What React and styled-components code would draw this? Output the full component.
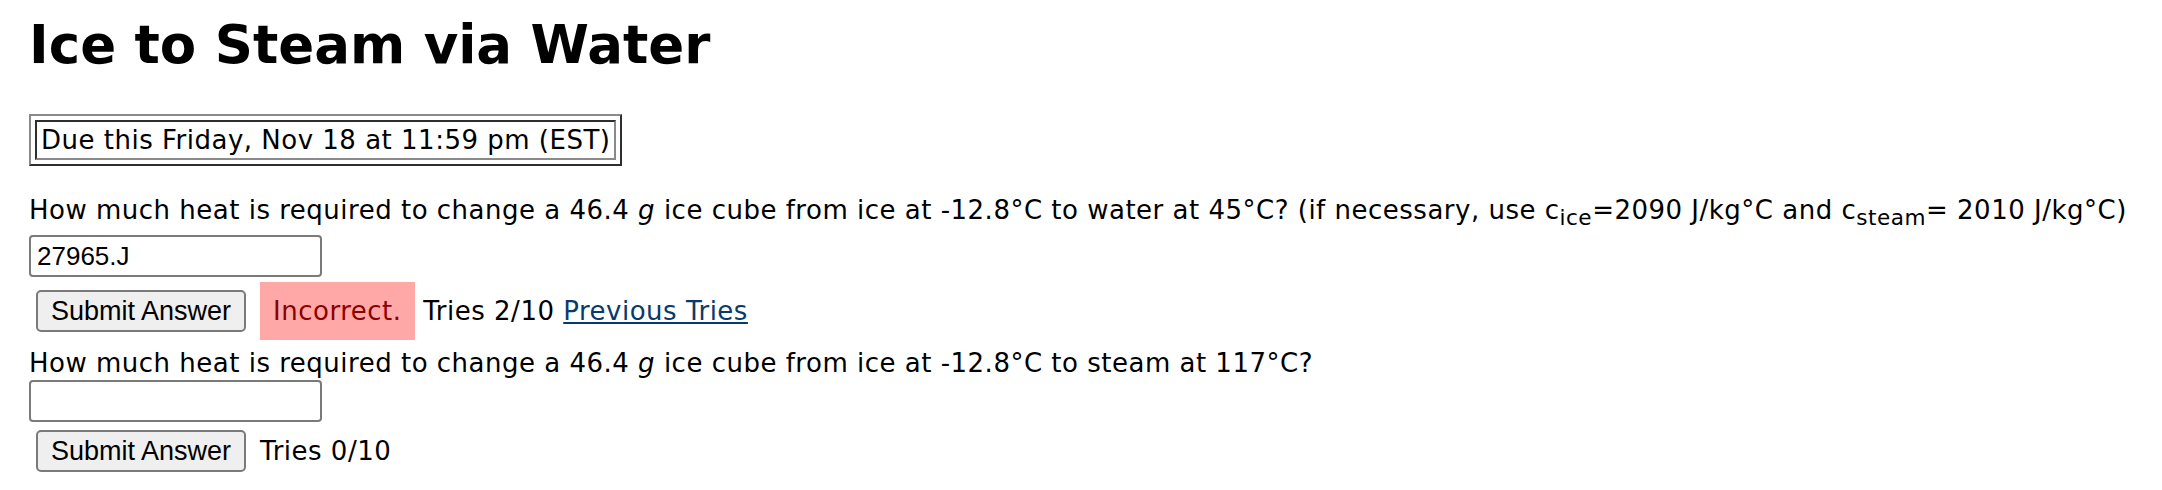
import React from "react";
import styled, { createGlobalStyle } from "styled-components";

const GlobalStyle = createGlobalStyle`
  html, body {
    margin: 0;
    padding: 0;
    background: #ffffff;
  }
  body {
    font-family: "DejaVu Sans", Verdana, sans-serif;
    color: #000;
  }
`;

const Page = styled.div`
  padding: 0 20px 0 29px;
`;

const Title = styled.h1`
  margin: 14px 0 38px;
  font-size: 53px;
  line-height: 62px;
  font-weight: bold;
`;

const DueBox = styled.div`
  display: inline-block;
  padding: 4px;
  border: 2px solid;
  border-color: #8a8a8a #2e2e2e #2e2e2e #8a8a8a;
`;

const DueCell = styled.div`
  padding: 3px 4px;
  border: 2px solid;
  border-color: #2e2e2e #8a8a8a #8a8a8a #2e2e2e;
  font-size: 26px;
  line-height: 30px;
  letter-spacing: 0.5px;
`;

const Problem = styled.div`
  margin-top: 29px;

  & + & {
    margin-top: 8px;
  }
`;

const Prompt = styled.p`
  margin: 0;
  font-size: 26px;
  line-height: 30px;
  letter-spacing: 0.5px;
  white-space: nowrap;

  sub {
    font-size: 0.83em;
  }
`;

const AnswerInput = styled.input`
  display: block;
  box-sizing: border-box;
  width: 293px;
  height: 42px;
  margin-top: 2px;
  padding: 2px 6px;
  border: 2px solid #7a7a7a;
  border-radius: 4px;
  font-family: "Liberation Sans", Arial, sans-serif;
  font-size: 26px;
  color: #000;
  background: #fff;
  outline: none;
`;

const ActionRow = styled.div`
  display: flex;
  align-items: center;
  margin-top: 5px;
  font-size: 26px;
  line-height: 30px;
  letter-spacing: 0.5px;
  white-space: pre;
`;

const SubmitButton = styled.button`
  box-sizing: border-box;
  height: 42px;
  margin: 3px 14px 3px 7px;
  padding: 0 13px;
  border: 2px solid #7a7a7a;
  border-radius: 5px;
  background: #efefef;
  font-family: "Liberation Sans", Arial, sans-serif;
  font-size: 27px;
  color: #000;
`;

const Feedback = styled.span`
  padding: 14px 13px;
  background: #ffa8a8;
  color: #8b0000;
`;

const TriesLink = styled.a`
  color: #0a3a6b;
  text-decoration: underline;
`;

export default function App() {
  return (
    <Page>
      <GlobalStyle />
      <Title>Ice to Steam via Water</Title>
      <DueBox>
        <DueCell>Due this Friday, Nov 18 at 11:59 pm (EST)</DueCell>
      </DueBox>

      <Problem>
        <Prompt>
          How much heat is required to change a 46.4 <i>g</i> ice cube from ice
          at -12.8°C to water at 45°C? (if necessary, use c<sub>ice</sub>=2090
          J/kg°C and c<sub>steam</sub>= 2010 J/kg°C)
        </Prompt>
        <AnswerInput defaultValue="27965.J" />
        <ActionRow>
          <SubmitButton>Submit Answer</SubmitButton>
          <Feedback>Incorrect.</Feedback>
          <span> Tries 2/10 </span>
          <TriesLink href="#">Previous Tries</TriesLink>
        </ActionRow>
      </Problem>

      <Problem>
        <Prompt>
          How much heat is required to change a 46.4 <i>g</i> ice cube from ice
          at -12.8°C to steam at 117°C?
        </Prompt>
        <AnswerInput />
        <ActionRow>
          <SubmitButton>Submit Answer</SubmitButton>
          <span>Tries 0/10</span>
        </ActionRow>
      </Problem>
    </Page>
  );
}
